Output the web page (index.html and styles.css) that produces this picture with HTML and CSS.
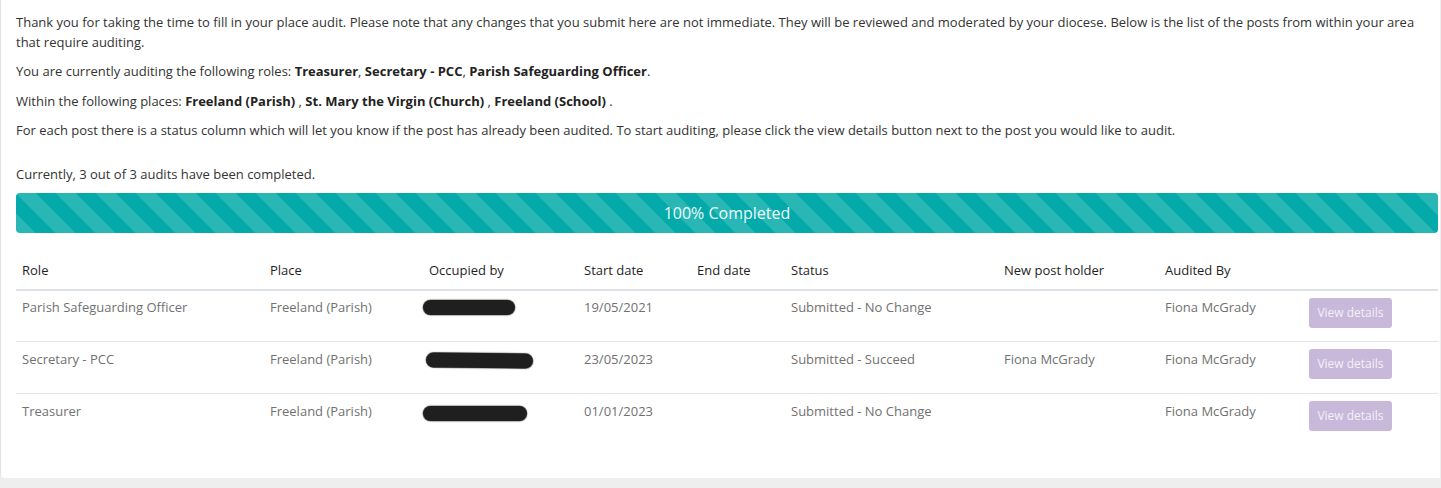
FILE: index.html
```html
<!DOCTYPE html>
<html lang="en">
<head>
<meta charset="utf-8">
<title>Place audit</title>
<link rel="stylesheet" href="styles.css">
</head>
<body>
<div class="card">
  <p>Thank you for taking the time to fill in your place audit. Please note that any changes that you submit here are not immediate. They will be reviewed and moderated by your diocese. Below is the list of the posts from within your area that require auditing.</p>
  <p>You are currently auditing the following roles: <b>Treasurer</b>, <b>Secretary - PCC</b>, <b>Parish Safeguarding Officer</b>.</p>
  <p>Within the following places: <b>Freeland (Parish) </b>, <b>St. Mary the Virgin (Church) </b>, <b>Freeland (School) </b>.</p>
  <p>For each post there is a status column which will let you know if the post has already been audited. To start auditing, please click the view details button next to the post you would like to audit.</p>
  <p class="summary">Currently, 3 out of 3 audits have been completed.</p>
  <div class="progress"><div class="progress-bar">100% Completed</div></div>
  <table class="audit">
    <colgroup>
      <col class="c-role"><col class="c-place"><col class="c-occ"><col class="c-start"><col class="c-end"><col class="c-status"><col class="c-new"><col class="c-aud"><col class="c-btn">
    </colgroup>
    <thead>
      <tr><th>Role</th><th>Place</th><th>Occupied by</th><th>Start date</th><th>End date</th><th>Status</th><th>New post holder</th><th>Audited By</th><th></th></tr>
    </thead>
    <tbody>
      <tr>
        <td>Parish Safeguarding Officer</td><td>Freeland (Parish)</td>
        <td><span class="redact r1"></span></td>
        <td>19/05/2021</td><td></td><td>Submitted - No Change</td><td></td><td>Fiona McGrady</td>
        <td class="btn-cell"><span class="btn">View details</span></td>
      </tr>
      <tr>
        <td>Secretary - PCC</td><td>Freeland (Parish)</td>
        <td><span class="redact r2"></span></td>
        <td>23/05/2023</td><td></td><td>Submitted - Succeed</td><td>Fiona McGrady</td><td>Fiona McGrady</td>
        <td class="btn-cell"><span class="btn">View details</span></td>
      </tr>
      <tr>
        <td>Treasurer</td><td>Freeland (Parish)</td>
        <td><span class="redact r3"></span></td>
        <td>01/01/2023</td><td></td><td>Submitted - No Change</td><td></td><td>Fiona McGrady</td>
        <td class="btn-cell"><span class="btn">View details</span></td>
      </tr>
    </tbody>
  </table>
</div>
</body>
</html>
```
FILE: styles.css
```css
html, body {
  margin: 0;
  padding: 0;
}
body {
  background: #eeeeee;
  font-family: "Open Sans", "Liberation Sans", sans-serif;
  font-size: 13px;
  line-height: 1.5;
  color: #333333;
}
.card {
  background: #ffffff;
  border-left: 1px solid #e2e2e2;
  border-bottom-left-radius: 4px;
  margin-right: 1px;
  padding: 13.25px 2px 33px 15px;
  height: 478px;
  box-sizing: border-box;
}
p {
  margin: 0 0 10px;
}
b {
  font-weight: 700;
  color: #222222;
}
.summary {
  margin-top: 24.5px;
  margin-bottom: 8px;
}
.progress {
  height: 40px;
  border-radius: 4px;
  overflow: hidden;
  background: #03aaa9;
}
.progress-bar {
  height: 100%;
  display: flex;
  align-items: center;
  justify-content: center;
  color: #eefafa;
  font-size: 16px;
  background-color: #03aaa9;
  background-image: linear-gradient(45deg, rgba(255,255,255,.15) 25%, transparent 25%, transparent 50%, rgba(255,255,255,.15) 50%, rgba(255,255,255,.15) 75%, transparent 75%, transparent);
  background-size: 40px 40px;
}
.audit {
  width: 100%;
  border-collapse: collapse;
  table-layout: fixed;
  margin-top: 17px;
}
.c-role { width: 248px; }
.c-place { width: 159px; }
.c-occ { width: 155px; }
.c-start { width: 113px; }
.c-end { width: 94px; }
.c-status { width: 213px; }
.c-new { width: 161px; }
.c-aud { width: 144px; }
.c-btn { width: auto; }
.audit th {
  text-align: left;
  font-weight: 400;
  color: #1f1f1f;
  padding: 11px 6px 8.5px;
  border-bottom: 2px solid #dee2e6;
}
.audit td {
  color: #717171;
  padding: 7.5px 6px 0;
  height: 52px;
  box-sizing: border-box;
  vertical-align: top;
  border-top: 1px solid #e3e6e9;
  white-space: nowrap;
}
.audit tbody tr:first-child td {
  border-top: 0;
}
.audit td.btn-cell {
  padding-top: 7px;
}
.btn {
  display: inline-block;
  width: 83px;
  height: 30px;
  line-height: 30px;
  text-align: center;
  background: #c8b9da;
  color: #f3f0f7;
  font-size: 12px;
  border-radius: 3px;
}
.redact {
  display: block;
  background: #1f1f1f;
  border-radius: 8px;
  margin-left: -6px;
  box-shadow: 0 0 1px 0.5px rgba(30,30,30,0.6);
}
.r1 { width: 92px; height: 15px; margin-top: 2px; }
.r2 { width: 107px; height: 15px; margin-top: 3px; margin-left: -3px; transform: rotate(0.6deg); }
.r3 { width: 104px; height: 15px; margin-top: 4px; margin-left: -6px; }
```
